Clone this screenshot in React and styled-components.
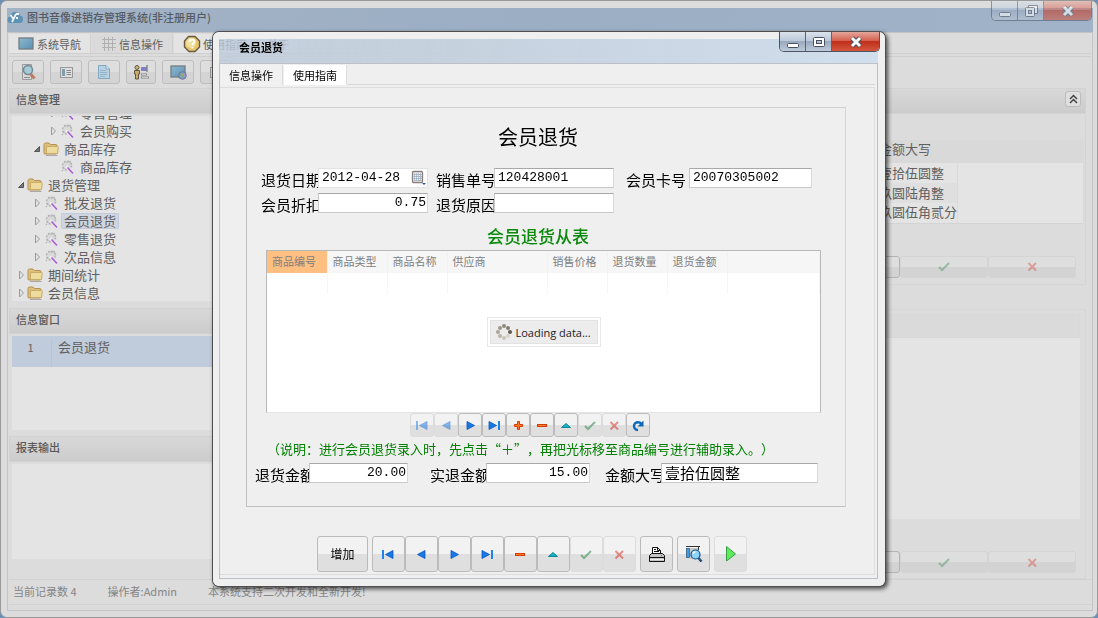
import { useEffect, useRef } from 'react'
import styled, { createGlobalStyle } from 'styled-components'

export default function App() {
	return (
		<>
			<GlobalStyle />
			<MainWindow />
			<Overlay>
				<ReturnDialog />
			</Overlay>
		</>
	)
}

const TREE = [
	{ label: '零售管理', level: 2, arrow: 'closed', icon: 'tool' },
	{ label: '会员购买', level: 2, arrow: 'closed', icon: 'tool' },
	{ label: '商品库存', level: 1, arrow: 'open', icon: 'folder' },
	{ label: '商品库存', level: 2, arrow: 'none', icon: 'tool' },
	{ label: '退货管理', level: 0, arrow: 'open', icon: 'folder' },
	{ label: '批发退货', level: 1, arrow: 'closed', icon: 'tool' },
	{ label: '会员退货', level: 1, arrow: 'closed', icon: 'tool', selected: true },
	{ label: '零售退货', level: 1, arrow: 'closed', icon: 'tool' },
	{ label: '次品信息', level: 1, arrow: 'closed', icon: 'tool' },
	{ label: '期间统计', level: 0, arrow: 'closed', icon: 'folder' },
	{ label: '会员信息', level: 0, arrow: 'closed', icon: 'folder' },
]

const COLUMNS = [
	{ label: '商品编号', width: 60, active: true },
	{ label: '商品类型', width: 60 },
	{ label: '商品名称', width: 60 },
	{ label: '供应商', width: 100 },
	{ label: '销售价格', width: 60 },
	{ label: '退货数量', width: 60 },
	{ label: '退货金额', width: 60 },
]

const DETAIL_NAV = [
	['first', '首条', true],
	['prev', '上一条', true],
	['next', '下一条'],
	['last', '末条'],
	['plus', '插入'],
	['minus', '删除'],
	['up', '编辑'],
	['check', '保存', true],
	['cross', '取消', true],
	['refresh', '刷新'],
]

const MASTER_NAV = [
	['first', '首条'],
	['prev', '上一条'],
	['next', '下一条'],
	['last', '末条'],
	['minus', '删除'],
	['up', '编辑'],
	['check', '保存', true],
	['cross', '取消', true],
]

function MainWindow() {
	const treeRef = useRef(null)

	useEffect(() => {
		treeRef.current.scrollTop = 12
	}, [])

	return (
		<Window>
			<TitleBar>
				<LogoIcon />
				<span>图书音像进销存管理系统(非注册用户)</span>
			</TitleBar>
			<WindowControls restore faded />
			<Shell>
				<MainTabs>
					<MainTab type='button' $active>
						<ScreenIcon />
						系统导航
					</MainTab>
					<MainTab type='button'>
						<GridIcon />
						信息操作
					</MainTab>
					<MainTab type='button' $active>
						<HelpIcon />
						使用指南
					</MainTab>
					<MainTab type='button' $active>
						关于
					</MainTab>
				</MainTabs>
				<ToolBar>
					<ToolButton type='button' aria-label='查找'>
						<SearchPageIcon />
					</ToolButton>
					<ToolButton type='button' aria-label='列表'>
						<ListIcon />
					</ToolButton>
					<ToolButton type='button' aria-label='文档'>
						<DocIcon />
					</ToolButton>
					<ToolButton type='button' aria-label='用户' $narrow>
						<UserIcon />
					</ToolButton>
					<ToolButton type='button' aria-label='网络'>
						<ScreenIcon globe />
					</ToolButton>
					<ToolButton type='button' aria-label='窗口'>
						<ListIcon />
					</ToolButton>
				</ToolBar>
				<Columns>
					<Sidebar>
						<PanelHeader>信息管理</PanelHeader>
						<Tree ref={treeRef}>
							{TREE.map((node, i) => (
								<TreeRow key={i} $level={node.level}>
									<Arrow kind={node.arrow} />
									{node.icon === 'folder' ? <FolderIcon /> : <ToolIcon />}
									<TreeLabel $selected={node.selected}>{node.label}</TreeLabel>
								</TreeRow>
							))}
						</Tree>
						<PanelHeader>信息窗口</PanelHeader>
						<WindowList>
							<WindowItem>
								<WindowIndex>1</WindowIndex>
								<span>会员退货</span>
							</WindowItem>
						</WindowList>
						<PanelHeader>报表输出</PanelHeader>
						<ReportBox />
					</Sidebar>
					<Content>
						<PanelHeader>
							<span />
							<CollapseButton type='button' aria-label='收起'>
								<svg width='11' height='11' viewBox='0 0 11 11' fill='none' stroke='#444' strokeWidth='1.5'>
									<path d='M2 5L5.5 1.5L9 5M2 9L5.5 5.500L9 9' />
								</svg>
							</CollapseButton>
						</PanelHeader>
						<ListPanel>
							<AmountTable>
								<thead>
									<tr>
										<th />
										<th>金额大写</th>
										<th />
									</tr>
								</thead>
								<tbody>
									<tr>
										<td />
										<td>壹拾伍圆整</td>
										<td />
									</tr>
									<tr>
										<td />
										<td>玖圆陆角整</td>
										<td />
									</tr>
									<tr>
										<td />
										<td>玖圆伍角贰分</td>
										<td />
									</tr>
								</tbody>
							</AmountTable>
							<WideNav />
						</ListPanel>
						<DetailPanel>
							<DetailHead />
							<DetailBody />
							<WideNav />
						</DetailPanel>
					</Content>
				</Columns>
				<StatusBar>
					<span>当前记录数 4</span>
					<span>操作者:Admin</span>
					<span>本系统支持二次开发和全新开发!</span>
				</StatusBar>
			</Shell>
		</Window>
	)
}

function WideNav() {
	return (
		<WideNavRow>
			<WideButton type='button' aria-label='编辑'>
				<NavIcon name='up' />
			</WideButton>
			<WideButton type='button' aria-label='保存' $soft>
				<NavIcon name='check' />
			</WideButton>
			<WideButton type='button' aria-label='取消' $soft>
				<NavIcon name='cross' />
			</WideButton>
		</WideNavRow>
	)
}

function ReturnDialog() {
	return (
		<Dialog role='dialog' aria-label='会员退货'>
			<DialogTitle>会员退货</DialogTitle>
			<WindowControls />
			<DialogBody>
				<DialogTabs>
					<DialogTab type='button'>信息操作</DialogTab>
					<DialogTab type='button' $active>
						使用指南
					</DialogTab>
					<TabLine />
				</DialogTabs>
				<Page>
					<GroupBox>
						<FormTitle>会员退货</FormTitle>
						<FieldGrid>
							<Label htmlFor='date'>退货日期</Label>
							<DateField>
								<input id='date' defaultValue='2012-04-28' />
								<CalendarIcon />
							</DateField>
							<Gap />
							<Label htmlFor='order'>销售单号</Label>
							<Field id='order' defaultValue='120428001' />
							<Gap />
							<Label htmlFor='card'>会员卡号</Label>
							<Field id='card' defaultValue='20070305002' />
							<Label htmlFor='discount'>会员折扣</Label>
							<Field id='discount' defaultValue='0.75' $right />
							<Gap />
							<Label htmlFor='reason'>退货原因</Label>
							<Field id='reason' defaultValue='' />
						</FieldGrid>
						<SubTitle>会员退货从表</SubTitle>
						<GridBox>
							<DetailTable>
								<thead>
									<tr>
										{COLUMNS.map((col) => (
											<HeadCell key={col.label} $width={col.width} $active={col.active}>
												{col.label}
											</HeadCell>
										))}
										<HeadCell />
									</tr>
								</thead>
								<tbody>
									<tr>
										{COLUMNS.map((col) => (
											<td key={col.label} />
										))}
										<td />
									</tr>
								</tbody>
							</DetailTable>
							<Loading>
								<LoadingInner>
									<Spinner />
									<LoadingText>Loading data...</LoadingText>
								</LoadingInner>
							</Loading>
						</GridBox>
						<DetailNav>
							{DETAIL_NAV.map(([name, label, off]) => (
								<NavButton key={name} type='button' aria-label={label} disabled={off}>
									<NavIcon name={name} />
								</NavButton>
							))}
						</DetailNav>
						<Hint>（说明：进行会员退货录入时，先点击“＋”，再把光标移至商品编号进行辅助录入。）</Hint>
						<TotalGrid>
							<Label htmlFor='amount'>退货金额</Label>
							<Field id='amount' defaultValue='20.00' $right />
							<Gap />
							<Label htmlFor='actual'>实退金额</Label>
							<Field id='actual' defaultValue='15.00' $right />
							<Gap />
							<Label htmlFor='words'>金额大写</Label>
							<Field id='words' defaultValue='壹拾伍圆整' $large />
						</TotalGrid>
					</GroupBox>
					<Actions>
						<BigButton type='button' $wide>
							增加
						</BigButton>
						<MasterNav>
							{MASTER_NAV.map(([name, label, off]) => (
								<BigButton key={name} type='button' aria-label={label} disabled={off}>
									<NavIcon name={name} />
								</BigButton>
							))}
						</MasterNav>
						<BigButton type='button' aria-label='打印'>
							<PrintIcon />
						</BigButton>
						<BigButton type='button' aria-label='预览'>
							<PreviewIcon />
						</BigButton>
						<BigButton type='button' aria-label='执行' $soft>
							<RunIcon />
						</BigButton>
					</Actions>
				</Page>
			</DialogBody>
		</Dialog>
	)
}

function WindowControls({ restore, faded }) {
	return (
		<Controls $faded={faded}>
			<ControlButton type='button' aria-label='最小化'>
				<svg width='14' height='12' viewBox='0 0 14 12'>
					<rect x='1.500' y='7.500' width='11' height='4' rx='1' fill='#fff' stroke='#4a4f60' />
				</svg>
			</ControlButton>
			<ControlButton type='button' aria-label='最大化'>
				<svg width='14' height='12' viewBox='0 0 14 12'>
					{restore && <path d='M4.500 3V0.500H13.500V8.500H11' fill='#fff' stroke='#4a4f60' />}
					<rect x='1.500' y={restore ? 2.5 : 1.5} width={restore ? 9 : 11} height='9' rx='1' fill='#fff' stroke='#4a4f60' />
					<rect x='4.500' y={restore ? 5.5 : 4.5} width={restore ? 3 : 5} height='3' fill='#b9c4d6' stroke='#4a4f60' />
				</svg>
			</ControlButton>
			<ControlButton type='button' aria-label='关闭' $close>
				<svg width='14' height='12' viewBox='0 0 14 12' fill='none'>
					<path d='M3 2L11 10M11 2L3 10' stroke='#4a4f60' strokeWidth='5' />
					<path d='M3 2L11 10M11 2L3 10' stroke='#fff' strokeWidth='3' />
				</svg>
			</ControlButton>
		</Controls>
	)
}

function NavIcon({ name }) {
	const blue = { fill: '#1778e6', stroke: '#0a57bd', strokeWidth: 0.8 }
	const shapes = {
		first: (
			<>
				<rect x='1' y='3' width='2' height='9' fill='#1b84e8' />
				<path d='M12 3.500V11.500L4.500 7.500Z' {...blue} />
			</>
		),
		prev: <path d='M11 3.500V11.500L3.500 7.500Z' {...blue} />,
		next: <path d='M4 3.500V11.500L11.500 7.500Z' {...blue} />,
		last: (
			<>
				<path d='M2 3.500V11.500L9.500 7.500Z' {...blue} />
				<rect x='11' y='3' width='2' height='9' fill='#1b84e8' />
			</>
		),
		plus: (
			<path d='M6.500 3.500H8.500V6.500H11.500V8.500H8.500V11.500H6.500V8.500H3.500V6.500H6.500Z' fill='#ff7a22' stroke='#d63c08' />
		),
		minus: <rect x='2.500' y='6.500' width='9' height='2' fill='#ff7a22' stroke='#d63c08' />,
		up: <path d='M2.500 9.500L7 5.500L11.500 9.500Z' fill='#12b5c4' stroke='#087d90' strokeWidth='0.9' />,
		check: <path d='M2 8L5 11L12 4' fill='none' stroke='#1c8040' strokeWidth='2' />,
		cross: <path d='M3.500 4L11 11.500M11 4L3.500 11.500' fill='none' stroke='#d6281c' strokeWidth='2' />,
		refresh: (
			<>
				<path d='M7 12C4 12 3 9.500 3 8C3 5.500 5 4.200 7 4.200C8.500 4.200 9.500 4.800 10.500 6' fill='none' stroke='#0c69ba' strokeWidth='2.400' />
				<path d='M12.500 2.500V8.500H6.500Z' fill='#0c69ba' />
			</>
		),
	}
	return (
		<svg width='15' height='15' viewBox='0 0 15 15' aria-hidden='true'>
			{shapes[name]}
		</svg>
	)
}

function Arrow({ kind }) {
	return (
		<svg width='12' height='12' viewBox='0 0 12 12'>
			{kind === 'closed' && <path d='M4.500 2L8.500 6L4.500 10Z' fill='none' stroke='#9a9a9a' />}
			{kind === 'open' && <path d='M8.500 3.500V8.500H3.500Z' fill='#777' stroke='#555' />}
		</svg>
	)
}

function FolderIcon() {
	return (
		<svg width='16' height='16' viewBox='0 0 16 16'>
			<path d='M1 12V3.500Q1 2 2.500 2H6L7.500 3.500H13Q14 3.500 14 5V12Q14 13 13 13H2Q1 13 1 12Z' fill='#dcc07c' stroke='#b59252' />
			<path d='M3.500 5.500H14.500Q15.500 5.500 15.300 6.500L14.500 12.500H3.500Z' fill='#eedc9f' stroke='#c9aa66' />
			<path d='M3 14.500H14.500' stroke='#a8a8a8' />
		</svg>
	)
}

function ToolIcon() {
	return (
		<svg width='16' height='16' viewBox='0 0 16 16' fill='none'>
			<circle cx='8' cy='6.500' r='4.500' fill='#d9d9d9' stroke='#b4b4b4' strokeWidth='1.500' strokeDasharray='2 1.500' />
			<path d='M3 12L6 8M5 3L11 3M11 2L13 6' stroke='#b4b4b4' strokeWidth='1.300' strokeDasharray='1.500 1' />
			<path d='M7 7.500L14.500 14.500' stroke='#eee' strokeWidth='3' />
			<path d='M8.500 8.500L14 14.500' stroke='#a862cf' strokeWidth='1.800' />
		</svg>
	)
}

function LogoIcon() {
	return (
		<svg width='17' height='14' viewBox='0 0 17 14'>
			<path d='M4 13Q0 13 0.500 9.500Q0.500 7 3 6.500Q4 1.500 8.500 2Q12 2 13 5.500Q16.500 6 16 9.500Q16 13 12.500 13Z' fill='#5f93b6' />
			<path d='M3.500 5L6 8.500M9 4L5 12M9 8H11M9 4H12' stroke='#eef3f6' strokeWidth='1.800' fill='none' />
		</svg>
	)
}

function ScreenIcon({ globe }) {
	return (
		<svg width='17' height='16' viewBox='0 0 17 16'>
			<defs>
				<linearGradient id='screen' x1='0' y1='0' x2='1' y2='1'>
					<stop offset='0' stopColor='#8db9cf' />
					<stop offset='1' stopColor='#5b90b2' />
				</linearGradient>
			</defs>
			<rect x='1' y='2' width='14' height='11' fill='url(#screen)' stroke='#737b82' strokeWidth='1.300' />
			{globe && (
				<>
					<circle cx='12.500' cy='11.500' r='3.800' fill='#7f9bd0' stroke='#696a86' strokeWidth='0.800' />
					<path d='M10 10L13 9L14 12L12 14Z' fill='#84b077' />
					<path d='M13 8.500L15.500 11L14 12Z' fill='#c888ba' />
				</>
			)}
		</svg>
	)
}

function GridIcon() {
	return (
		<svg width='16' height='16' viewBox='0 0 16 16' stroke='#b0b0b0' fill='none'>
			<path d='M3.500 1V15M7.500 1V15M11.500 1V15M1 3.500H15M1 7.500H15M1 11.500H15' />
		</svg>
	)
}

function HelpIcon() {
	return (
		<svg width='18' height='18' viewBox='0 0 18 18'>
			<path d='M5.500 1.500H12L16.500 6V12L12 16.500H6L1.500 12V6Z' fill='#e7c66e' stroke='#69593f' strokeWidth='1.400' />
			<circle cx='8' cy='8' r='5' fill='#f1df9d' />
			<path d='M6.500 7Q6.500 4.500 9 4.500Q11.500 4.500 11.500 6.500Q11.500 8 9.500 9V10.500M9.500 12V13.500' fill='none' stroke='#fff' strokeWidth='1.800' />
		</svg>
	)
}

function SearchPageIcon() {
	return (
		<svg width='18' height='18' viewBox='0 0 18 18'>
			<path d='M3.500 1.500H12.500V16.500H3.500Z' fill='#d9d9d9' stroke='#999' />
			<circle cx='9' cy='7' r='4.500' fill='#a5cbd9' stroke='#6f8a96' strokeWidth='1.500' />
			<path d='M11.500 11L15.500 15.500' stroke='#bd7a62' strokeWidth='3' />
			<path d='M5 14.500H11' stroke='#8c8c8c' />
		</svg>
	)
}

function ListIcon() {
	return (
		<svg width='15' height='15' viewBox='0 0 15 15'>
			<rect x='1.500' y='2.500' width='12' height='10' fill='#dedede' stroke='#999' />
			<rect x='3' y='4' width='3' height='7' fill='#7f9db0' />
			<path d='M7.500 5.500H12M7.500 7.500H12M7.500 9.500H12' stroke='#888' />
		</svg>
	)
}

function DocIcon() {
	return (
		<svg width='16' height='16' viewBox='0 0 16 16'>
			<path d='M2.500 1.500H10L13.500 5V14.500H2.500Z' fill='#b8d2e2' stroke='#81a8c1' />
			<path d='M10 1.500V5H13.500' fill='#d9e7ee' stroke='#81a8c1' />
			<path d='M4 6.500H10M4 8.500H11M4 10.500H11M4 12.500H9' stroke='#92b3c7' />
		</svg>
	)
}

function UserIcon() {
	return (
		<svg width='17' height='16' viewBox='0 0 17 16'>
			<circle cx='4' cy='3.500' r='2' fill='#d3b676' stroke='#5e5646' />
			<path d='M1.500 6.500H6.500V10L5.500 10V15H2.500V10H1.500Z' fill='#c9a968' stroke='#5e5646' />
			<path d='M8 3H14V7H8Z' fill='#7f7fc8' />
			<path d='M14 1V8' stroke='#888' strokeWidth='1.500' />
			<path d='M8 10.500H14M8 13.500H16' stroke='#888' strokeWidth='2' />
			<path d='M9 10.500H13M9 13.500H15' stroke='#c9c9c9' />
		</svg>
	)
}

function CalendarIcon() {
	return (
		<svg width='16' height='16' viewBox='0 0 16 16'>
			<rect x='1.500' y='1.500' width='10' height='11' rx='1' fill='#eef2f6' stroke='#8c7d78' strokeWidth='1.300' />
			<path d='M3.500 3V11M5.500 3V11M7.500 3V11M9.500 3V11M2.500 4.500H11M2.500 6.500H11M2.500 8.500H11M2.500 10.500H11' stroke='#9aaac0' strokeWidth='0.700' />
			<path d='M11 13H15L13 15Z' fill='#23539a' />
		</svg>
	)
}

function PrintIcon() {
	return (
		<svg width='18' height='17' viewBox='0 0 18 17'>
			<path d='M4.500 8V1.500H9.500L12.500 4.500V8' fill='#fff' stroke='#111' />
			<path d='M6 3.500H8M6 5.500H11M9.500 1.500V4.500H12.500' fill='none' stroke='#111' />
			<path d='M3.500 7.500H14.500L16.500 9.500V15.500H1.500V9.500Z' fill='#c4c4c4' stroke='#111' />
			<path d='M2 11.500H16' stroke='#111' />
			<path d='M2 13.500H16' stroke='#eee' />
			<rect x='13' y='9' width='1' height='1' fill='#e33' />
		</svg>
	)
}

function PreviewIcon() {
	return (
		<svg width='18' height='18' viewBox='0 0 18 18'>
			<path d='M1 1.500H15' stroke='#333' strokeWidth='1' />
			<rect x='1.500' y='3.500' width='3' height='9' fill='#3d9fe0' stroke='#2b4f73' strokeWidth='0.700' />
			<path d='M5 3H14V14H5Z' fill='#c8c8c8' />
			<path d='M13.500 2V5' stroke='#333' />
			<circle cx='10.500' cy='9.500' r='4.500' fill='#8fd2fa' stroke='#14518a' strokeWidth='1.200' />
			<path d='M8 9Q8.500 7 10.500 6.800' stroke='#fff' strokeWidth='1.400' fill='none' />
			<path d='M13.500 13L16.500 16.500' stroke='#14395f' strokeWidth='2.500' />
			<path d='M14 13.500L16 15.500' stroke='#3d9fe0' />
		</svg>
	)
}

function RunIcon() {
	return (
		<svg width='16' height='18' viewBox='0 0 16 18'>
			<path d='M3.500 1.500L12.500 9L3.500 16Z' fill='#5eec5a' stroke='#3a9e48' />
		</svg>
	)
}

function Spinner() {
	const dots = [
		[8, 2, '#8d897e'],
		[12, 4, '#827d73'],
		[14, 8, '#5f5950'],
		[12, 12, '#d5d2c9'],
		[8, 14, '#c7c4b9'],
		[4, 12, '#b8b5aa'],
		[2, 8, '#aaa69c'],
		[4, 4, '#9c988d'],
	]
	return (
		<svg width='16' height='16' viewBox='0 0 16 16'>
			{dots.map(([x, y, fill]) => (
				<circle key={`${x}-${y}`} cx={x} cy={y} r='2' fill={fill} />
			))}
		</svg>
	)
}

const GlobalStyle = createGlobalStyle`
	*, *::before, *::after {
		box-sizing: border-box;
	}

	body {
		margin: 0;
		background: #6c8fb4;
		font-family: 'Noto Sans CJK SC', sans-serif;
		font-size: 11px;
		line-height: 16px;
		color: #606060;
	}

	button, input {
		margin: 0;
		font: inherit;
		color: inherit;
	}

	button {
		padding: 0;
		border: 0;
		background: none;
	}

	svg {
		display: block;
		flex-shrink: 0;
	}
`

/* main window */

const Window = styled.div`
	position: relative;
	display: flex;
	flex-direction: column;
	min-height: 100vh;
	padding: 7px 4px 6px 6px;
	border: 1px solid #999;
	border-radius: 7px;
	background: #dcdcdc;
`

const TitleBar = styled.header`
	display: flex;
	align-items: center;
	gap: 3px;
	height: 24px;
	padding-bottom: 6px;
	background: linear-gradient(100deg, #a3b3c6, #9caec4 50%, #a0b3c8);
	color: #565b62;
	font-size: 11px;
	font-weight: 500;
`

const Controls = styled.div`
	position: absolute;
	top: ${(p) => (p.$faded ? '0' : '-7px')};
	right: ${(p) => (p.$faded ? '5px' : '-2px')};
	display: flex;
	border: 1px solid #4c5465;
	border-top: 0;
	border-radius: 0 0 5px 5px;
	overflow: hidden;
	opacity: ${(p) => (p.$faded ? 0.55 : 1)};
`

const ControlButton = styled.button`
	display: grid;
	place-items: center;
	width: ${(p) => (p.$close ? '47px' : '26px')};
	height: 19px;
	border-right: ${(p) => (p.$close ? '0' : '1px solid #5b6375')};
	background: ${(p) =>
		p.$close
			? 'linear-gradient(#e3a79c, #d5614e 45%, #c0301a 50%, #d4563e)'
			: 'linear-gradient(#dbe3ec, #bcc9d9 45%, #9aa9be 50%, #bccada)'};
`

const Shell = styled.div`
	flex: 1;
	display: flex;
	flex-direction: column;
	padding: 1px;
	border: 1px solid #c2c4c8;
`

const MainTabs = styled.div`
	display: flex;
	gap: 1px;
	height: 20px;
	border-bottom: 1px solid #cfcfcf;
`

const MainTab = styled.button`
	display: flex;
	align-items: center;
	gap: 2px;
	padding: 0 9px;
	border-right: 1px solid #d0d0d0;
	background: ${(p) => (p.$active ? '#e4e4e4' : '#dadada')};
`

const ToolBar = styled.div`
	display: flex;
	gap: 6px;
	margin-top: 2px;
	padding: 3px 3px 4px;
	border-top: 1px solid #cfcfcf;
`

const ToolButton = styled.button`
	display: grid;
	place-items: center;
	width: ${(p) => (p.$narrow ? '30px' : '32px')};
	height: 24px;
	border: 1px solid #bebebe;
	border-radius: 3px;
	background: linear-gradient(#dedede 50%, #d4d4d4 50%);
`

const Columns = styled.div`
	flex: 1;
	display: flex;
	gap: 6px;
	padding-right: 5px;
`

const Sidebar = styled.aside`
	flex: 0 0 236px;
	display: flex;
	flex-direction: column;
	padding-bottom: 20px;
`

const PanelHeader = styled.h2`
	display: flex;
	align-items: center;
	justify-content: space-between;
	height: 26px;
	margin: 0 0 2px;
	padding: 0 4px 4px 6px;
	border: 1px solid #d2d2d2;
	background: linear-gradient(#d8d8d8, #cccccc);
	font-size: 11px;
	font-weight: 500;
	color: #585858;
`

const CollapseButton = styled.button`
	display: grid;
	place-items: center;
	width: 16px;
	height: 16px;
	border: 1px solid #bcbcbc;
	border-radius: 3px;
	background: #dfdfdf;
`

const Tree = styled.ul`
	height: 185px;
	margin: 0 3px 7px;
	padding: 0;
	overflow: hidden;
	background: #e4e4e4;
	list-style: none;
`

const TreeRow = styled.li`
	display: flex;
	align-items: center;
	height: 18px;
	padding-left: ${(p) => p.$level * 16 + 3}px;
	font-size: 13px;
	line-height: 16px;
`

const TreeLabel = styled.span`
	margin-left: 2px;
	padding: 0 3px;
	border-radius: 2px;
	background: ${(p) => (p.$selected ? '#cfd6e2' : 'transparent')};
	box-shadow: ${(p) => (p.$selected ? 'inset 0 0 0 1px #bfcadb' : 'none')};
`

const WindowList = styled.div`
	height: 94px;
	margin: 0 3px 6px;
	background: #e4e4e4;
`

const WindowItem = styled.div`
	display: grid;
	grid-template-columns: 40px 1fr;
	height: 31px;
	padding-top: 3px;
	background: #c0cbdb;
	font-size: 13px;

	> span:last-child {
		padding-left: 6px;
	}
`

const WindowIndex = styled.span`
	padding-right: 2px;
	border-right: 1px solid #b8c4d6;
	text-align: center;
	font-size: 11px;
`

const ReportBox = styled.div`
	flex: 1;
	margin: 0 3px;
	background: #e4e4e4;
`

const Content = styled.main`
	flex: 1;
	display: flex;
	flex-direction: column;
`

const ListPanel = styled.section`
	padding: 24px 1px 6px;
	border: 1px solid #d4d4d4;
	border-top: 0;
`

const AmountTable = styled.table`
	width: 100%;
	table-layout: fixed;
	border-collapse: collapse;
	border-bottom: 1px solid #d4d4d4;
	font-size: 13px;
	white-space: nowrap;

	th, td {
		height: 20px;
		padding: 0 3px 1px;
		border-right: 1px solid #dadada;
		background: #e4e4e4;
		font-weight: 400;
		text-align: left;
	}

	th {
		height: 23px;
		padding-bottom: 5px;
		background: #d9d9d9;
	}

	tr:nth-child(2) td:nth-child(2) {
		background: #dfdfdf;
	}

	th:nth-child(2) {
		width: 82px;
	}

	th:nth-child(3) {
		width: 126px;
	}
`

const WideNavRow = styled.div`
	display: flex;
	justify-content: flex-end;
	padding: 32px 8px 0 0;
`

const WideButton = styled.button`
	display: grid;
	place-items: center;
	width: 88px;
	height: 22px;
	border: 1px solid ${(p) => (p.$soft ? '#d4d4d4' : '#b4b4b4')};
	border-radius: 3px;
	background: linear-gradient(#dedede 50%, #d3d3d3 50%);

	svg {
		opacity: 0.35;
	}
`

const DetailPanel = styled.section`
	flex: 1;
	display: flex;
	flex-direction: column;
	margin-top: 24px;
	padding: 4px 1px 5px;
	border: 1px solid #d6d6d6;
`

const DetailHead = styled.div`
	height: 24px;
	margin-right: 4px;
	border: 1px solid #d8d8d8;
	background: #dadada;
`

const DetailBody = styled.div`
	flex: 1;
	margin-right: 4px;
	background: #e4e4e4;
`

const StatusBar = styled.footer`
	display: flex;
	align-items: center;
	gap: 31px;
	height: 26px;
	margin-bottom: 4px;
	padding: 0 4px 2px;
	border-top: 1px solid #d2d2d2;
	border-bottom: 1px solid #d2d2d2;
	color: #858585;
`

/* dialog */

const Overlay = styled.div`
	position: fixed;
	inset: 0;
	display: grid;
	place-items: center;
`

const Dialog = styled.section`
	position: relative;
	width: 672px;
	max-width: 100%;
	border: 7px solid #efefef;
	border-left-width: 6px;
	border-radius: 6px;
	box-shadow: 0 0 0 1px #4e4e4e, 2px 2px 4px 1px rgba(0, 0, 0, 0.65);
	color: #000;
`

const DialogTitle = styled.h1`
	height: 24px;
	margin: 0;
	padding: 0 20px;
	background: linear-gradient(100deg, rgba(190, 203, 220, 0.8), rgba(196, 208, 222, 0.93) 35%, rgba(208, 222, 236, 0.95));
	font-size: 11px;
	font-weight: 700;
`

const DialogBody = styled.div`
	padding: 1px 2px 3px 0;
	border: 1px solid #bcc1c9;
	background: #efefef;
`

const DialogTabs = styled.div`
	display: flex;
	gap: 1px;
	height: 20px;
`

const DialogTab = styled.button`
	padding: 0 9px;
	border-right: 1px solid #dcdcdc;
	background: ${(p) => (p.$active ? '#fff' : '#f1f1f1')};
`

const TabLine = styled.div`
	flex: 1;
	border-bottom: 1px solid #d6d6d6;
`

const Page = styled.div`
	margin-top: 2px;
	padding: 19px 28px 2px 26px;
	border: 1px solid #dcdedc;
	border-left: 0;
`

const GroupBox = styled.form`
	height: 400px;
	border: 1px solid #c0c0c0;
	border-top-color: #cfcfcf;
	border-right-color: #d6d6d6;
`

const FormTitle = styled.h2`
	margin: 0;
	padding: 15px 16px 17px 0;
	font-size: 20px;
	font-weight: 400;
	line-height: 28px;
	text-align: center;
`

const FieldGrid = styled.div`
	display: grid;
	grid-template-columns: 57px 110px 8px 58px 120px 12px 63px 123px;
	row-gap: 5px;
	padding-left: 14px;
`

const TotalGrid = styled(FieldGrid)`
	grid-template-columns: 54px 99px 22px 56px 104px 15px 56px 157px;
	padding-left: 8px;
`

const Gap = styled.span``

const Label = styled.label`
	height: 20px;
	padding-top: 4px;
	overflow: hidden;
	font-size: 15px;
	line-height: 16px;
	white-space: nowrap;
`

const Field = styled.input`
	width: 100%;
	height: 20px;
	padding: 0 ${(p) => (p.$right ? '1px' : '3px')} 1px 3px;
	border: 1px solid #c8c8c8;
	border-top-color: #a8a8a8;
	border-right-color: #d8d8e0;
	background: #fff;
	font-family: ${(p) => (p.$large ? "'Noto Sans CJK SC', sans-serif" : "'Liberation Mono', 'Noto Sans CJK SC', monospace")};
	font-size: ${(p) => (p.$large ? '15px' : '13px')};
	text-align: ${(p) => (p.$right ? 'right' : 'left')};
	outline: 0;
`

const DateField = styled.div`
	display: flex;
	align-items: center;
	height: 20px;
	padding: 0 0 0 3px;
	border: 1px solid #e2e2e2;
	background: #fff;

	input {
		flex: 1;
		min-width: 0;
		height: 18px;
		padding: 0 0 1px;
		border: 0;
		outline: 0;
		font-family: 'Liberation Mono', monospace;
		font-size: 13px;
	}
`

const SubTitle = styled.h3`
	margin: 0;
	padding: 11px 16px 2px 0;
	color: #0a8a0a;
	font-size: 17px;
	font-weight: 500;
	line-height: 24px;
	text-align: center;
`

const GridBox = styled.div`
	position: relative;
	height: 163px;
	margin: 0 24px 0 19px;
	border: 1px solid #b8b8b8;
	border-bottom-color: #e4e4e4;
	background: #fff;
`

const DetailTable = styled.table`
	width: 100%;
	table-layout: fixed;
	border-collapse: collapse;

	td {
		height: 21px;
		padding: 0;
		border-right: 1px solid #f6f6f6;
	}
`

const HeadCell = styled.th`
	width: ${(p) => (p.$width ? `${p.$width}px` : 'auto')};
	height: 22px;
	padding: 0 0 2px 5px;
	border-right: 1px solid #f2f2f2;
	background: ${(p) => (p.$active ? '#ffbf80' : '#f6f6f6')};
	color: #808080;
	font-weight: 400;
	text-align: left;
	white-space: nowrap;
`

const Loading = styled.div`
	position: absolute;
	inset: 0;
	margin: auto;
	width: 114px;
	height: 30px;
	padding: 2px;
	border: 1px solid #e8e8e8;
	background: #fff;
`

const LoadingInner = styled.div`
	display: flex;
	align-items: center;
	gap: 4px;
	height: 24px;
	padding: 0 5px;
	border: 1px solid #e2e2e2;
	background: #ececec;
	color: #222;
`

const LoadingText = styled.span`
	padding-top: 3px;
	font-family: 'Open Sans', sans-serif;
	white-space: nowrap;
`

const DetailNav = styled.div`
	display: flex;
	justify-content: center;
	padding-right: 32px;
`

const NavButton = styled.button`
	display: grid;
	place-items: center;
	width: 24px;
	height: 24px;
	border: 1px solid ${(p) => (p.disabled || p.$soft ? '#dcdcdc' : '#bbb')};
	border-radius: 3px;
	background: linear-gradient(#f2f2f2 50%, #dfdfdf 50%);

	svg {
		opacity: ${(p) => (p.disabled ? 0.5 : 1)};
	}
`

const Hint = styled.p`
	margin: 0;
	padding: 4px 0 6px 20px;
	color: #008000;
	font-size: 13px;
	line-height: 16px;
	text-spacing-trim: space-all;
	white-space: nowrap;
`

const Actions = styled.div`
	display: flex;
	gap: 4px;
	margin: 29px 0 0 71px;
`

const MasterNav = styled.div`
	display: flex;
`

const BigButton = styled(NavButton)`
	width: ${(p) => (p.$wide ? '51px' : '33px')};
	height: 36px;
	font-size: 12px;
`
